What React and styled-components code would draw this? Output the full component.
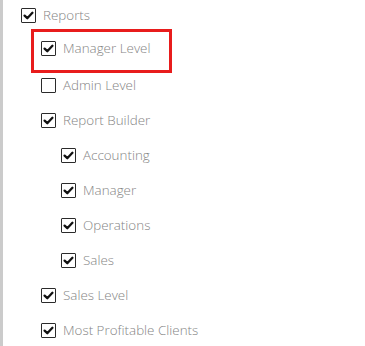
import React from 'react'
import styled, { createGlobalStyle } from 'styled-components'

const GlobalStyle = createGlobalStyle`
  html, body {
    margin: 0;
    padding: 0;
    background: #fff;
  }
  body {
    font-family: 'Open Sans', 'Liberation Sans', sans-serif;
  }
`

const tree = [
  {
    label: 'Reports',
    checked: true,
    children: [
      { label: 'Manager Level', checked: true, highlighted: true },
      { label: 'Admin Level', checked: false },
      {
        label: 'Report Builder',
        checked: true,
        children: [
          { label: 'Accounting', checked: true },
          { label: 'Manager', checked: true },
          { label: 'Operations', checked: true },
          { label: 'Sales', checked: true },
        ],
      },
      { label: 'Sales Level', checked: true },
      { label: 'Most Profitable Clients', checked: true },
    ],
  },
]

const Node = ({ node }) => (
  <Item>
    <Row highlighted={node.highlighted}>
      <Box>
        {node.checked && (
          <svg width="11" height="11" viewBox="0 0 11 11">
            <path d="M1.6 5.6 L4.3 8.2 L9.4 2.8" fill="none" stroke="#111" strokeWidth="2.3" strokeLinecap="round" strokeLinejoin="round" />
          </svg>
        )}
      </Box>
      <Label>{node.label}</Label>
    </Row>
    {node.children && (
      <List>
        {node.children.map(child => (
          <Node key={child.label} node={child} />
        ))}
      </List>
    )}
  </Item>
)

const App = () => (
  <>
    <GlobalStyle />
    <Panel>
      <Tree>
        {tree.map(node => (
          <Node key={node.label} node={node} />
        ))}
      </Tree>
    </Panel>
  </>
)

export default App

const Panel = styled.div`
  height: 346px;
  border-left: 3px solid #cbcbcb;
  box-sizing: border-box;
  overflow: hidden;
`

const Tree = styled.ul`
  list-style: none;
  margin: 0;
  padding: 0 0 0 18px;
`

const List = styled.ul`
  list-style: none;
  margin: 0;
  padding: 0 0 0 20px;
`

const Item = styled.li`
  margin: 0;
`

const Row = styled.div`
  position: relative;
  display: flex;
  align-items: center;
  gap: 7px;
  height: 30px;
  padding-bottom: 5px;

  ${props =>
    props.highlighted &&
    `
    top: -2px;
    &::after {
      content: '';
      position: absolute;
      left: -10px;
      top: -4px;
      width: 141px;
      height: 44px;
      box-sizing: border-box;
      border: 3px solid #e81c1c;
    }
  `}
`

const Box = styled.span`
  width: 15px;
  height: 15px;
  box-sizing: border-box;
  border: 1.5px solid #2b2b2b;
  border-radius: 1px;
  display: flex;
  align-items: center;
  justify-content: center;
  flex-shrink: 0;
`

const Label = styled.span`
  font-size: 13.4px;
  font-weight: 300;
  color: #858585;
  white-space: nowrap;
`
